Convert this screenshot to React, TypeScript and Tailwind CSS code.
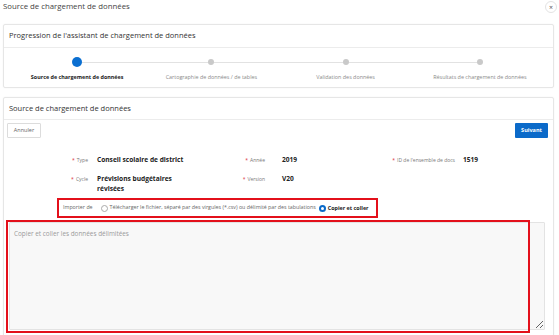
const steps = [
  "Source de chargement de données",
  "Cartographie de données / de tables",
  "Validation des données",
  "Résultats de chargement de données",
];

function Req() {
  return <span className="mr-[2px] text-[#d9303b]">*</span>;
}

export default function App() {
  return (
    <div className="relative h-[335px] w-[559px] overflow-hidden bg-white font-['Open_Sans',sans-serif] text-[#333]">
      {/* dialog title */}
      <div className="flex h-[14px] items-center justify-between pl-[3px] pr-[2px]">
        <span className="text-[7.8px] text-[#444]">Source de chargement de données</span>
        <button className="flex h-[12px] w-[12px] items-center justify-center rounded-full border border-[#e3e3e3] text-[7px] leading-none text-[#555]">
          ×
        </button>
      </div>

      {/* progression card */}
      <div className="ml-[3px] mt-[10px] w-[551px] rounded-[2px] border border-[#e6e6e6] shadow-[0_0_2px_rgba(0,0,0,0.05)]">
        <div className="flex h-[23px] items-center border-b border-[#ececec] px-[5px] text-[7.5px] text-[#333]">
          Progression de l'assistant de chargement de données
        </div>
        <div className="relative grid h-[39px] grid-cols-4 px-[6px]">
          <div className="absolute left-[73px] right-[73px] top-[14px] h-px bg-[#e2e2e2]" />
          {steps.map((s, i) => (
            <div key={s} className="relative flex flex-col items-center pt-[9px]">
              <div className="flex h-[10px] items-center justify-center">
                {i === 0 ? (
                  <span className="h-[10px] w-[10px] rounded-full bg-[#0b6fd1]" />
                ) : (
                  <span className="h-[6px] w-[6px] rounded-full bg-[#c9c9c9]" />
                )}
              </div>
              <div
                className={
                  i === 0
                    ? "mt-[6px] text-[5.4px] font-bold leading-[8px] text-[#222]"
                    : "mt-[6px] text-[5.4px] leading-[8px] text-[#8a8a8a]"
                }
              >
                {s}
              </div>
            </div>
          ))}
        </div>
      </div>

      {/* source card */}
      <div className="ml-[3px] mt-[9px] h-[260px] w-[551px] rounded-[2px] border border-[#e6e6e6] shadow-[0_0_2px_rgba(0,0,0,0.05)]">
        <div className="flex h-[22px] items-center border-b border-[#ececec] px-[5px] text-[7.5px] text-[#333]">
          Source de chargement de données
        </div>
        <div className="flex items-center justify-between pl-[3px] pr-[5px] pt-[3px]">
          <button className="flex h-[15px] w-[34px] items-center justify-center rounded-[1px] border border-[#dcdcdc] bg-white text-[5.5px] text-[#666]">
            Annuler
          </button>
          <button className="flex h-[15px] w-[33px] items-center justify-center rounded-[1px] bg-[#0b6ac9] text-[5.5px] font-bold text-white">
            Suivant
          </button>
        </div>

        {/* fields */}
        <div className="mt-[17px] text-[5px] leading-[10px]">
          <div className="flex">
            <span className="w-[84px] text-right text-[#777]">
              <Req />Type
            </span>
            <span className="ml-[9px] w-[90px] text-[6.6px] font-bold text-[#222]">Conseil scolaire de district</span>
            <span className="w-[78px] text-right text-[#777]">
              <Req />Année
            </span>
            <span className="ml-[17px] w-[80px] text-[6.6px] font-bold text-[#222]">2019</span>
            <span className="w-[93px] text-right text-[#777]">
              <Req />ID de l'ensemble de docs
            </span>
            <span className="ml-[8px] text-[6.6px] font-bold text-[#222]">1519</span>
          </div>
          <div className="mt-[9px] flex">
            <span className="w-[84px] text-right text-[#777]">
              <Req />Cycle
            </span>
            <span className="ml-[9px] w-[90px] text-[6.6px] font-bold text-[#222]">Prévisions budgétaires révisées</span>
            <span className="w-[78px] text-right text-[#777]">
              <Req />Version
            </span>
            <span className="ml-[17px] w-[80px] text-[6.6px] font-bold text-[#222]">V20</span>
          </div>
        </div>

        {/* import source */}
        <div className="ml-[53px] mt-[4px] flex h-[20px] w-[321px] items-center border-2 border-[#e3101b] pl-[4px] text-[5.3px] text-[#666]">
          <span>Importer de</span>
          <span className="ml-[8px] h-[7px] w-[7px] rounded-full border border-[#aaa] bg-white" />
          <span className="ml-[2px]">
            Télécharger le fichier, séparé par des virgules (*.csv) ou délimité par des tabulations
          </span>
          <span className="ml-[3px] flex h-[7px] w-[7px] items-center justify-center rounded-full bg-[#0b6ac9]">
            <span className="h-[3px] w-[3px] rounded-full bg-white" />
          </span>
          <span className="ml-[2px] text-[5.4px] font-bold text-[#222]">Copier et coller</span>
        </div>

        {/* paste area */}
        <div className="relative ml-[5px] mt-[4px] h-[108px] w-[536px]">
          <textarea
            readOnly
            placeholder="Copier et coller les données délimitées"
            className="block h-full w-full rounded-[1px] border border-[#e3e3e3] bg-[#f8f8f8] px-[4px] pt-[6px] text-[6.4px] text-[#333] outline-none placeholder:text-[#9a9a9a]"
          />
          <div className="pointer-events-none absolute left-[-3px] top-[-2px] h-[113px] w-[524px] border-2 border-[#e3101b]" />
        </div>
      </div>
    </div>
  );
}
